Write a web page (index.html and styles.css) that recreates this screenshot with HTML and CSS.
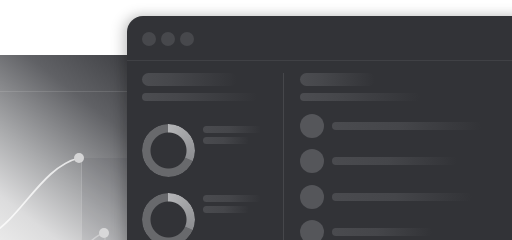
FILE: index.html
```html
<!DOCTYPE html>
<html>
<head>
    <title>Dashboard Preview</title>
    <meta charset="UTF-8">
    <link rel="stylesheet" href="styles.css">
</head>
<body>
    <div class="stage">

        <div class="chart-panel">
            <div class="chart-head"></div>
            <div class="chart-body">
                <div class="chart-shade"></div>
                <svg class="chart" width="140" height="149" viewBox="0 0 140 149">
                    <line x1="105" y1="141" x2="105" y2="149" stroke="rgba(255,255,255,0.25)" stroke-width="1"/>
                    <path d="M -10 143 C 22 125, 42 75, 79 66" fill="none" stroke="rgba(255,255,255,0.75)" stroke-width="1.8"/>
                    <path d="M -5 163 C 20 172, 48 182, 70 166 S 95 143 104 141" fill="none" stroke="rgba(255,255,255,0.35)" stroke-width="1.5"/>
                    <circle cx="79" cy="66" r="5" fill="#d4d4d5"/>
                    <circle cx="104" cy="141" r="5" fill="#d8d8d9"/>
                </svg>
            </div>
        </div>

        <div class="window">
            <div class="window-bar">
                <span class="dot"></span>
                <span class="dot"></span>
                <span class="dot"></span>
            </div>
            <div class="window-body">
                <div class="col col-left">
                    <div class="bar bar-title"></div>
                    <div class="bar bar-sub"></div>
                    <div class="donut-list">
                        <div class="donut-row">
                            <div class="donut"></div>
                            <div class="donut-text">
                                <div class="line line-a"></div>
                                <div class="line line-b"></div>
                            </div>
                        </div>
                        <div class="donut-row">
                            <div class="donut"></div>
                            <div class="donut-text">
                                <div class="line line-a"></div>
                                <div class="line line-b"></div>
                            </div>
                        </div>
                    </div>
                </div>
                <div class="col col-right">
                    <div class="bar bar-title"></div>
                    <div class="bar bar-sub"></div>
                    <div class="item-list">
                        <div class="item"><span class="avatar"></span><span class="line" style="width: 150px"></span></div>
                        <div class="item"><span class="avatar"></span><span class="line" style="width: 125px"></span></div>
                        <div class="item"><span class="avatar"></span><span class="line" style="width: 140px"></span></div>
                        <div class="item"><span class="avatar"></span><span class="line" style="width: 100px"></span></div>
                    </div>
                </div>
            </div>
        </div>

    </div>
</body>
</html>
```

FILE: styles.css
```css
body {
    margin: 0;
    padding: 0;
    background: #ffffff;
    font-family: 'Liberation Sans', sans-serif;
    overflow: hidden;
}

.stage {
    position: relative;
    width: 512px;
    height: 240px;
    overflow: hidden;
}

/* back panel with the line chart */
.chart-panel {
    position: absolute;
    left: 0;
    top: 55px;
    width: 140px;
    height: 185px;
    background: linear-gradient(218deg, #3c3d41 0%, #606165 30%, #a9aaac 62%, #dcdcdd 85%, #e9e9e9 100%);
}

.chart-head {
    height: 36px;
    border-bottom: 1px solid rgba(255, 255, 255, 0.12);
}

.chart-body {
    position: relative;
}

/* darker band right of the highlighted point */
.chart-shade {
    position: absolute;
    left: 81px;
    top: 66px;
    right: 0;
    bottom: 0;
    background: rgba(40, 41, 45, 0.08);
    border-left: 1px solid rgba(255, 255, 255, 0.2);
}

.chart {
    display: block;
    position: relative;
}

/* front window */
.window {
    position: absolute;
    left: 127px;
    top: 16px;
    width: 400px;
    height: 240px;
    background: #323337;
    border-radius: 16px 0 0 0;
    box-shadow: -4px 0 14px rgba(0, 0, 0, 0.2), 0 -2px 10px rgba(0, 0, 0, 0.06);
}

.window-bar {
    height: 45px;
    box-sizing: border-box;
    border-bottom: 1px solid #404145;
    display: flex;
    align-items: center;
    gap: 5px;
    padding-left: 15px;
    padding-top: 1px;
}

.dot {
    width: 14px;
    height: 14px;
    border-radius: 50%;
    background: #47484c;
}

.window-body {
    display: flex;
    padding-top: 12px;
}

.col {
    display: flex;
    flex-direction: column;
}

.col-left {
    width: 157px;
    box-sizing: border-box;
    padding-left: 15px;
    border-right: 1px solid #46474b;
    height: 200px;
}

.col-right {
    padding-left: 16px;
}

.bar {
    border-radius: 7px;
    background: linear-gradient(90deg, #4c4d51 0%, #46474b 30%, rgba(70, 71, 75, 0) 100%);
}

.bar-title {
    width: 95px;
    height: 13px;
}

.bar-sub {
    width: 115px;
    height: 8px;
    margin-top: 7px;
}

.col-right .bar-title {
    width: 75px;
}

.col-right .bar-sub {
    width: 120px;
}

.donut-list {
    display: flex;
    flex-direction: column;
    gap: 16px;
    margin-top: 23px;
}

.donut-row {
    display: flex;
    gap: 8px;
}

.donut {
    width: 53px;
    height: 53px;
    border-radius: 50%;
    background: conic-gradient(#b4b5b7 0deg, #8c8d90 112deg, #68696c 114deg, #68696c 360deg);
    -webkit-mask: radial-gradient(circle, transparent 17.5px, #000 18.5px);
    mask: radial-gradient(circle, transparent 17.5px, #000 18.5px);
}

.donut-text {
    display: flex;
    flex-direction: column;
    gap: 4px;
    padding-top: 2px;
}

.line {
    display: block;
    height: 7px;
    border-radius: 4px;
    background: linear-gradient(90deg, #4a4b4f 0%, #45464a 45%, rgba(69, 70, 74, 0) 100%);
}

.line-a {
    width: 58px;
}

.line-b {
    width: 46px;
}

.item-list {
    display: flex;
    flex-direction: column;
    gap: 11.5px;
    margin-top: 12.5px;
}

.item {
    display: flex;
    align-items: center;
    gap: 8px;
}

.item .line {
    height: 8px;
}

.avatar {
    width: 24px;
    height: 24px;
    border-radius: 50%;
    background: #55565a;
}
```
